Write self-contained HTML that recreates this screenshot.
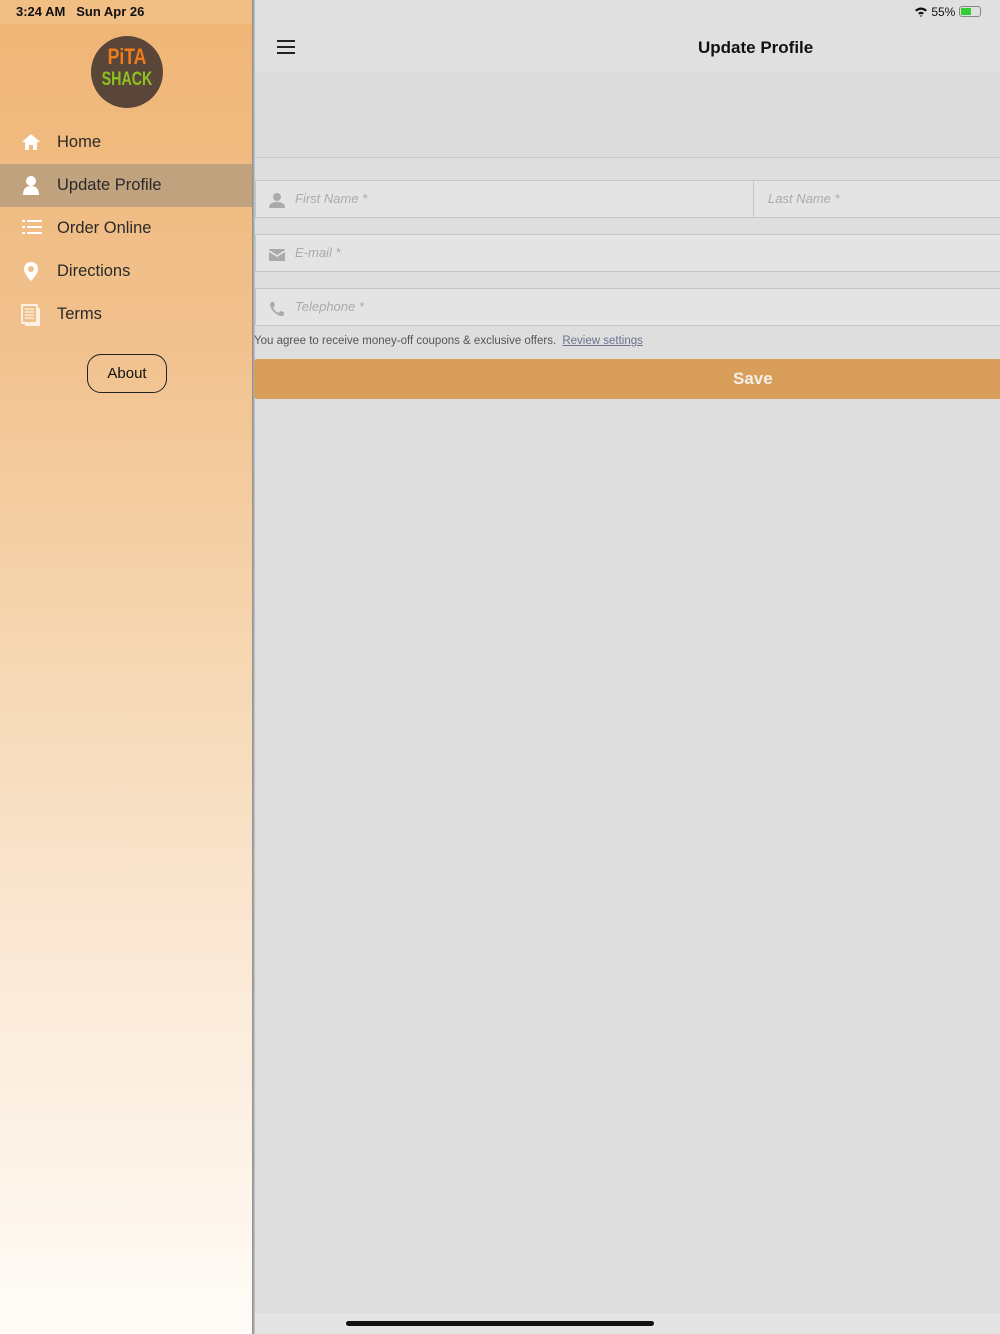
<!DOCTYPE html>
<html><head><style>
*{margin:0;padding:0;box-sizing:border-box}
body{width:1000px;height:1334px;overflow:hidden;position:relative;font-family:"Liberation Sans",sans-serif;background:#dedede}
#side{position:absolute;left:0;top:0;width:253px;height:1334px;background:linear-gradient(#efb574 0%,#f1c18d 25%,#f6d8b4 50%,#fbebda 75%,#fffcf8 100%)}
#shadow{position:absolute;left:252px;top:0;width:3px;height:1334px;background:linear-gradient(90deg,#888,#c8c8c8)}
.sb{position:absolute;top:0;height:24px;font-size:13px;font-weight:bold;color:#111;line-height:24px}
.item{position:absolute;left:0;width:252px;height:43px;font-size:16.5px;color:#2a2a2a;line-height:43px;padding-left:57px}
.item svg{position:absolute;left:21px;top:11px}
.field{position:absolute;height:38px;background:#e4e4e4;border:1px solid #c6c6c6;font-style:italic;font-size:13px;color:#aaa;line-height:36px}
</style></head><body>
<div id="side">
<div style="position:absolute;left:0;top:0;width:252px;height:24px;background:rgba(255,255,255,0.12)"></div>
<div class="sb" style="left:16px">3:24 AM&nbsp;&nbsp;&nbsp;Sun Apr 26</div>
<div style="position:absolute;left:91px;top:36px;width:72px;height:72px;border-radius:50%;background:#5a4639;text-align:center;font-weight:bold;line-height:1">
<div style="color:#f07c1a;font-size:22px;margin-top:10px;transform:scaleX(0.8)">PiTA</div>
<div style="color:#8cc21e;font-size:19px;margin-top:2px;transform:scaleX(0.75)">SHACK</div></div>
<div class="item" style="top:121px"><svg width="20" height="20" viewBox="0 0 20 20"><path d="M10 2 L1 10 H4 V18 H8 V13 H12 V18 H16 V10 H19 Z" fill="#fff"/></svg>Home</div>
<div class="item" style="top:164px;background:#c1a27f"><svg width="20" height="22" viewBox="0 0 20 22"><circle cx="10" cy="6" r="5" fill="#fff"/><path d="M2 20 Q2 11 10 11 Q18 11 18 20 Z" fill="#fff"/></svg>Update Profile</div>
<div class="item" style="top:207px"><svg width="22" height="20" viewBox="0 0 22 20"><g fill="#fff"><rect x="1" y="2" width="3" height="2"/><rect x="6" y="2" width="15" height="2"/><rect x="1" y="8" width="3" height="2"/><rect x="6" y="8" width="15" height="2"/><rect x="1" y="14" width="3" height="2"/><rect x="6" y="14" width="15" height="2"/></g></svg>Order Online</div>
<div class="item" style="top:250px"><svg width="20" height="22" viewBox="0 0 20 22"><path d="M10 1 C5 1 3 5 3 8 C3 13 10 20 10 20 C10 20 17 13 17 8 C17 5 15 1 10 1Z M10 5 A3 3 0 1 1 10 11 A3 3 0 1 1 10 5Z" fill="#fff" fill-rule="evenodd"/></svg>Directions</div>
<div class="item" style="top:293px"><svg width="20" height="22" viewBox="0 0 20 22"><rect x="1" y="1" width="15" height="18" fill="none" stroke="#fff" stroke-width="1.5"/><path d="M4 5h9M4 8h9M4 11h9M4 14h9" stroke="#fff"/><path d="M18 4v17H4" fill="none" stroke="#fff" stroke-width="1.5"/></svg>Terms</div>
<div style="position:absolute;left:87px;top:354px;width:80px;height:39px;border:1px solid #222;border-radius:14px;text-align:center;line-height:37px;font-size:15px;color:#111">About</div>
</div>
<div id="shadow"></div>
<div style="position:absolute;left:255px;top:0;width:745px;height:72px;background:#e0e0e0"></div>
<div style="position:absolute;left:914px;top:4px;font-size:12px;color:#111;line-height:16px"><svg width="14" height="11" viewBox="0 0 14 11" style="vertical-align:-1px"><path d="M1 4 Q7 -1 13 4 L11.5 5.5 Q7 2 2.5 5.5Z M4 7 Q7 4.5 10 7 L8.5 8.5 Q7 7.5 5.5 8.5Z M7 11 L5.8 9.8 Q7 9 8.2 9.8Z" fill="#111"/></svg> 55% <span style="display:inline-block;width:22px;height:11px;border:1px solid #888;border-radius:3px;vertical-align:-1px;position:relative"><span style="position:absolute;left:1px;top:1px;width:10px;height:7px;background:#3c3"></span></span></div>
<div style="position:absolute;left:277px;top:40px;width:18px"><div style="height:2px;background:#222;margin-bottom:4px"></div><div style="height:2px;background:#222;margin-bottom:4px"></div><div style="height:2px;background:#222"></div></div>
<div style="position:absolute;left:698px;top:38px;font-size:17px;font-weight:bold;color:#111">Update Profile</div>
<div style="position:absolute;left:255px;top:72px;width:745px;height:86px;background:#dcdcdc;border-bottom:1px solid #c8c8c8"></div>
<div class="field" style="left:255px;top:180px;width:499px;padding-left:39px"><svg width="16" height="16" viewBox="0 0 16 16" style="position:absolute;left:13px;top:11px"><circle cx="8" cy="5" r="4" fill="#aaa"/><path d="M0 16 Q0 10 8 10 Q16 10 16 16Z" fill="#aaa"/></svg>First Name *</div>
<div class="field" style="left:753px;top:180px;width:250px;padding-left:14px">Last Name *</div>
<div class="field" style="left:255px;top:234px;width:750px;padding-left:39px"><svg width="16" height="12" viewBox="0 0 16 12" style="position:absolute;left:13px;top:14px"><path d="M0 0H16V1L8 6L0 1Z M0 3L8 8L16 3V12H0Z" fill="#aaa"/></svg>E-mail *</div>
<div class="field" style="left:255px;top:288px;width:750px;padding-left:39px"><svg width="16" height="16" viewBox="0 0 16 16" style="position:absolute;left:13px;top:12px"><path d="M2 1 L5 1 L6 5 L4 6 Q5 10 10 12 L11 10 L15 11 L15 14 Q13 16 9 14 Q2 10 1 4Z" fill="#aaa"/></svg>Telephone *</div>
<div style="position:absolute;left:254px;top:335px;font-size:11.5px;color:#555">You agree to receive money-off coupons &amp; exclusive offers. <span style="color:#6a7390;text-decoration:underline;margin-left:3px">Review settings</span></div>
<div style="position:absolute;left:254px;top:359px;width:746px;height:40px;background:#d99f5a;border-radius:3px 0 0 3px;line-height:40px;color:#f4efe8;font-weight:bold;font-size:17px;padding-left:479px">Save</div>
<div style="position:absolute;left:255px;top:1313px;width:745px;height:21px;background:#e4e4e4"></div>
<div style="position:absolute;left:346px;top:1321px;width:308px;height:5px;border-radius:3px;background:#111"></div>
</body></html>
